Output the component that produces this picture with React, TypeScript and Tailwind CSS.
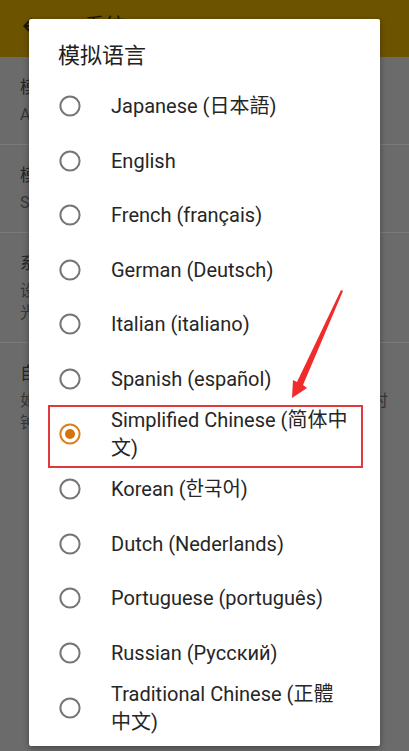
import React from "react";

const latin = {
  fontFamily:
    'Roboto, "Noto Sans CJK SC", "Noto Sans CJK KR", "Noto Sans CJK JP", sans-serif',
};

type Lang = { lines: string[]; selected?: boolean };

const langs: Lang[] = [
  { lines: ["Japanese (日本語)"] },
  { lines: ["English"] },
  { lines: ["French (français)"] },
  { lines: ["German (Deutsch)"] },
  { lines: ["Italian (italiano)"] },
  { lines: ["Spanish (español)"] },
  { lines: ["Simplified Chinese (简体中", "文)"], selected: true },
  { lines: ["Korean (한국어)"] },
  { lines: ["Dutch (Nederlands)"] },
  { lines: ["Portuguese (português)"] },
  { lines: ["Russian (Русский)"] },
  { lines: ["Traditional Chinese (正體", "中文)"] },
];

function Radio({ selected }: { selected?: boolean }) {
  return (
    <svg width="24" height="24" viewBox="0 0 24 24" className="shrink-0">
      {selected ? (
        <>
          <circle cx="12" cy="12" r="9.6" fill="none" stroke="#d9801f" strokeWidth="2" />
          <circle cx="12" cy="12" r="5" fill="#d4740c" />
        </>
      ) : (
        <circle cx="12" cy="12" r="9.6" fill="none" stroke="#767676" strokeWidth="2" />
      )}
    </svg>
  );
}

const bgItems = [
  { title: "模拟设备", subs: ["Android"] },
  { title: "模拟语言", subs: ["Simplified"] },
  { title: "系统字体", subs: ["设置字体", "光标位置"] },
  { title: "自动切换", subs: ["如果开启，应用将在检测到系统语言变化后的一段时", "钟内自动切换"] },
];

export default function App() {
  return (
    <div className="relative w-[409px] h-[751px] overflow-hidden bg-[#6b6b6b]" style={latin}>
      {/* top bar (dimmed) */}
      <div className="h-[57px] bg-[#6b5300] flex items-center pb-[6px] pl-[19px]">
        <svg width="24" height="24" viewBox="0 0 24 24">
          <path d="M20 11H7.83l5.59-5.59L12 4l-8 8 8 8 1.41-1.41L7.83 13H20v-2z" fill="#1c1500" />
        </svg>
        <span className="ml-[42px] text-[20px] text-[#1c1500]">系统</span>
      </div>
      {/* background list (dimmed) */}
      <div className="flex flex-col">
        {bgItems.map((it, i) => (
          <div
            key={i}
            className={
              i < bgItems.length - 1
                ? "px-5 pt-[18px] pb-[18px] border-b border-[#7a7a7a]"
                : "px-5 pt-[18px] pb-[18px]"
            }
          >
            <div className="text-[17px] leading-[24px] text-[#262626]">{it.title}</div>
            <div className="mt-[5px] text-[16px] leading-[22px] text-[#363636]">
              {it.subs.map((s, j) => (
                <div key={j} className="whitespace-nowrap">{s}</div>
              ))}
            </div>
          </div>
        ))}
      </div>

      {/* dialog */}
      <div className="absolute left-[29px] top-[19px] w-[351px] h-[727px] bg-white rounded-[2px] shadow-[0_2px_6px_rgba(0,0,0,0.35)] flex flex-col">
        <div className="h-[60px] pt-[23px] pl-[29px] text-[22px] leading-[28px] text-[#212121]">
          模拟语言
        </div>
        <div className="flex flex-col">
          {langs.map((l, i) => (
            <div key={i} className="min-h-[54.5px] flex items-center pl-[29px]">
              <Radio selected={l.selected} />
              <div className="ml-[29px] text-[20px] leading-[28px] text-[#262626]">
                {l.lines.map((ln, j) => (
                  <div key={j} className="whitespace-nowrap">{ln}</div>
                ))}
              </div>
            </div>
          ))}
        </div>
      </div>

      {/* annotation box */}
      <div className="absolute left-[48px] top-[405px] w-[315px] h-[63px] border-2 border-[#e0393e]" />
      {/* annotation arrow */}
      <svg className="absolute left-0 top-0" width="409" height="751" viewBox="0 0 409 751">
        <polygon
          points="341,290 343,291 303,385 307,388 292,398 293,380 297,382"
          fill="#f02b2b"
        />
      </svg>
    </div>
  );
}
